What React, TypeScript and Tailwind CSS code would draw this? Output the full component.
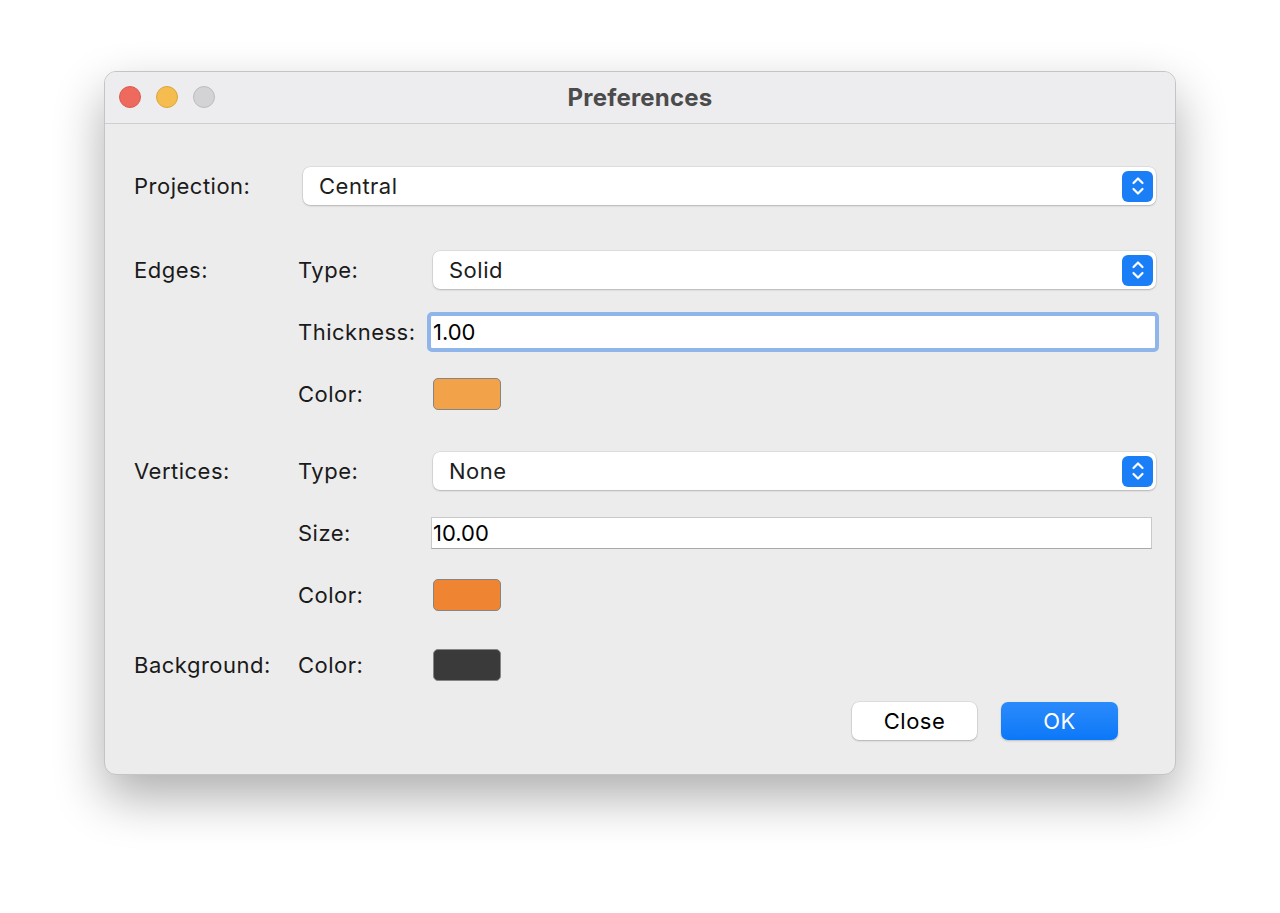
import React from "react";

const font = { fontFamily: "Inter, 'Liberation Sans', sans-serif" };

function Stepper() {
  return (
    <div className="flex h-[31px] w-[31px] items-center justify-center rounded-[6px] bg-[#1a7ff6]">
      <svg width="14" height="22" viewBox="0 0 14 22" fill="none">
        <path d="M2.5 8 L7 3.5 L11.5 8" stroke="white" strokeWidth="2.2" strokeLinecap="round" strokeLinejoin="round" />
        <path d="M2.5 14 L7 18.5 L11.5 14" stroke="white" strokeWidth="2.2" strokeLinecap="round" strokeLinejoin="round" />
      </svg>
    </div>
  );
}

function Select({ value }: { value: string }) {
  return (
    <div className="flex h-[38px] flex-1 items-center justify-between rounded-[7px] bg-white pl-4 pr-[3px] text-[22px] text-[#1d1d1d] shadow-[0_0_0_0.5px_rgba(0,0,0,0.12),0_1px_2px_rgba(0,0,0,0.18)]">
      <span>{value}</span>
      <Stepper />
    </div>
  );
}

function Swatch({ color }: { color: string }) {
  return <div className={`h-[32px] w-[68px] rounded-[5px] border border-[#858585] ${color}`} />;
}

function Row({ label, sub, children, className = "" }: { label?: string; sub?: string; children: React.ReactNode; className?: string }) {
  return (
    <div className={`flex h-[38px] items-center ${className}`}>
      <div className="w-[164px] shrink-0">{label}</div>
      <div className="w-[135px] shrink-0">{sub}</div>
      <div className="flex flex-1 items-center">{children}</div>
    </div>
  );
}

export default function App() {
  return (
    <div className="flex min-h-[913px] items-start justify-center bg-white pt-[71px]" style={font}>
      <div className="w-[1072px] overflow-hidden rounded-[12px] border border-[#c4c4c4] bg-[#ececec] shadow-[0_22px_50px_rgba(0,0,0,0.32)]">
        <div className="relative flex h-[52px] items-center justify-center border-b border-[#cfcfcf] bg-[#ededef]">
          <div className="absolute left-[14px] top-[14px] flex gap-[15px]">
            <div className="h-[22px] w-[22px] rounded-full border border-[#dc5a50] bg-[#ee6a5f]" />
            <div className="h-[22px] w-[22px] rounded-full border border-[#dca53a] bg-[#f5bd4f]" />
            <div className="h-[22px] w-[22px] rounded-full border border-[#bcbcbc] bg-[#d3d3d5]" />
          </div>
          <div className="text-[24px] font-bold tracking-[0.2px] text-[#4b4b4b]">Preferences</div>
        </div>

        <div className="pb-[34px] pl-[29px] pr-[19px] pt-[43px] text-[22px] tracking-[0.5px] text-[#1a1a1a]">
          <div className="flex h-[38px] items-center">
            <div className="w-[169px] shrink-0">Projection:</div>
            <Select value="Central" />
          </div>

          <Row label="Edges:" sub="Type:" className="mt-[46px]">
            <Select value="Solid" />
          </Row>
          <Row label="" sub="Thickness:" className="mt-[24px]">
            <div className="ml-[-6px] mr-[-3px] flex h-[40px] flex-1 items-center rounded-[5px] border-[4px] border-[#8fb5ea] bg-white pl-[2px] text-[22px] tracking-normal text-black">
              1.00
            </div>
          </Row>
          <Row label="" sub="Color:" className="mt-[24px]">
            <Swatch color="bg-[#f2a34a]" />
          </Row>

          <Row label="Vertices:" sub="Type:" className="mt-[39px]">
            <Select value="None" />
          </Row>
          <Row label="" sub="Size:" className="mt-[24px]">
            <div className="ml-[-2px] mr-[4px] flex h-[32px] flex-1 items-center border border-[#c9c9c9] border-b-[#a9a9a9] bg-white pl-[1px] text-[22px] tracking-normal text-black">
              10.00
            </div>
          </Row>
          <Row label="" sub="Color:" className="mt-[24px]">
            <Swatch color="bg-[#ef8433]" />
          </Row>

          <Row label="Background:" sub="Color:" className="mt-[32px]">
            <Swatch color="bg-[#3a3a3a]" />
          </Row>

          <div className="mt-[18px] flex justify-end gap-[24px] pr-[38px]">
            <button className="flex h-[38px] w-[125px] items-center justify-center rounded-[7px] bg-white text-[22px] text-black shadow-[0_0_0_0.5px_rgba(0,0,0,0.12),0_1px_2px_rgba(0,0,0,0.2)]">
              Close
            </button>
            <button className="flex h-[38px] w-[117px] items-center justify-center rounded-[7px] bg-gradient-to-b from-[#2a8bfb] to-[#0a78f8] text-[22px] text-white shadow-[0_1px_2px_rgba(0,0,0,0.2)]">
              OK
            </button>
          </div>
        </div>
      </div>
    </div>
  );
}
